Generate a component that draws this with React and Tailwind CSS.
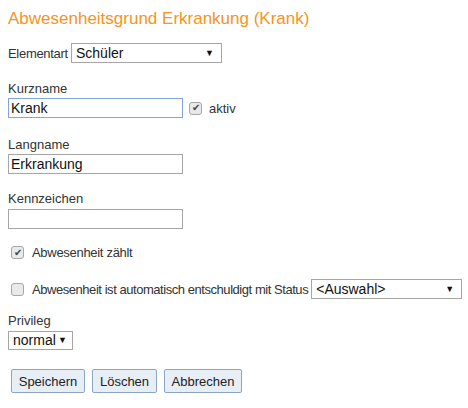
import React from 'react';

function Check({ checked }) {
  return (
    <span className="w-[13px] h-[13px] flex-none rounded-[3px] border border-[#a7a7a7] bg-[#e9e9e9] flex items-center justify-center text-[10px] leading-none text-[#444]">
      {checked ? '✔' : ''}
    </span>
  );
}

function Select({ value, className }) {
  return (
    <div className={`flex flex-none items-center justify-between border border-[#a6a6a6] bg-white pl-[4px] pr-[7px] text-[14px] text-[#111] ${className}`}>
      <span>{value}</span>
      <span className="text-[9px]">▼</span>
    </div>
  );
}

function TextBox({ value, focused }) {
  return (
    <div
      className={`w-[175px] h-[20px] border bg-white px-[2px] flex items-center text-[14px] text-[#111] ${
        focused ? 'border-[#7ea6dc]' : 'border-[#a6a6a6]'
      }`}
    >
      {value}
    </div>
  );
}

export default function App() {
  return (
    <div className="w-[468px] h-[408px] bg-white px-2 pt-[10px] font-['Liberation_Sans',Arial,sans-serif] text-[13px] leading-[15px] text-[#333]">
      <h1 className="text-[17px] leading-[18px] text-[#f7941d]">Abwesenheitsgrund Erkrankung (Krank)</h1>

      {/* Elementart */}
      <div className="mt-[15px] flex items-center h-[20px]">
        <span className="w-[63px] whitespace-nowrap tracking-[-0.3px]">Elementart</span>
        <Select value="Schüler" className="w-[151px] h-[20px]" />
      </div>

      {/* Kurzname */}
      <div className="mt-[18px]">Kurzname</div>
      <div className="mt-[2px] flex items-center">
        <TextBox value="Krank" focused />
        <span className="ml-[6px]">
          <Check checked />
        </span>
        <span className="ml-[7px]">aktiv</span>
      </div>

      {/* Langname */}
      <div className="mt-[19px]">Langname</div>
      <div className="mt-[2px]">
        <TextBox value="Erkrankung" />
      </div>

      {/* Kennzeichen */}
      <div className="mt-[17px]">Kennzeichen</div>
      <div className="mt-[3px]">
        <TextBox value="" />
      </div>

      <div className="mt-[16px] flex items-center h-[15px] pl-[3px]">
        <Check checked />
        <span className="ml-[8px] tracking-[-0.3px]">Abwesenheit zählt</span>
      </div>

      <div className="mt-[19px] flex items-center h-[20px] pl-[3px]">
        <Check />
        <span className="ml-[8px] flex-none whitespace-nowrap tracking-[-0.45px]">
          Abwesenheit ist automatisch entschuldigt mit Status
        </span>
        <Select value="<Auswahl>" className="ml-[3px] w-[151px] h-[20px]" />
      </div>

      {/* Privileg */}
      <div className="mt-[14px]">Privileg</div>
      <Select value="normal" className="mt-[3px] w-[65px] h-[19px] !pr-[5px]" />

      <div className="mt-[19px] ml-[3px] flex gap-[7px]">
        {['Speichern', 'Löschen', 'Abbrechen'].map((t, i) => (
          <button
            key={t}
            className={`h-[24px] rounded-[2px] border border-[#8aa6c4] bg-[#e8eef6] text-[13px] text-[#222] ${
              ['w-[74px]', 'w-[65px]', 'w-[78px]'][i]
            }`}
          >
            {t}
          </button>
        ))}
      </div>
    </div>
  );
}
